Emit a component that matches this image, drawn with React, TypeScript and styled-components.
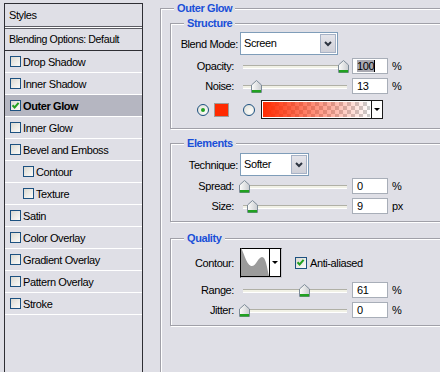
import styled, { createGlobalStyle } from 'styled-components';

const GlobalStyle = createGlobalStyle`
  html, body {
    margin: 0;
    padding: 0;
    width: 440px;
    height: 372px;
    overflow: hidden;
    background: #dfdfe6;
  }
  body {
    font-family: "Liberation Sans", Arial, sans-serif;
    font-size: 11px;
    letter-spacing: -0.4px;
    color: #000;
    white-space: nowrap;
  }
`;

const Page = styled.div`
  display: flex;
  align-items: flex-start;
  padding: 3px 0 0 4px;
`;

/* ---------- left styles list ---------- */

const StylesPanel = styled.div`
  flex-shrink: 0;
  width: 139px;
  height: 369px;
  box-sizing: border-box;
  border: 1px solid #2e2e34;
  border-bottom: none;
  background: #dfdfe6;
`;

const PanelHeader = styled.div`
  height: 22px;
  line-height: 22px;
  padding-left: 4px;
  border-bottom: 1px solid #5c5c64;
  box-shadow: 0 1px 0 #fff;
  margin-bottom: 1px;
`;

const BlendingRow = styled.div`
  height: 21px;
  line-height: 21px;
  padding-left: 4px;
  font-size: 10.6px;
  border-top: 1px solid #5c5c64;
  border-bottom: 1px solid #2e2e34;
`;

const StyleRow = styled.div<{ $active?: boolean; $indent?: boolean }>`
  display: flex;
  align-items: center;
  gap: 2px;
  height: 21px;
  padding-left: ${(p) => (p.$indent ? '18px' : '5px')};
  border-bottom: 1px solid #fff;
  background: ${(p) => (p.$active ? '#b5b6c1' : 'transparent')};
  font-weight: ${(p) => (p.$active ? 'bold' : 'normal')};
`;

const CheckBox = styled.span<{ $size?: number }>`
  position: relative;
  display: inline-block;
  flex-shrink: 0;
  width: ${(p) => p.$size ?? 11}px;
  height: ${(p) => p.$size ?? 11}px;
  box-sizing: border-box;
  border: 1px solid #1c5180;
  background: linear-gradient(135deg, #d9d8d0 0%, #ecebe6 50%, #fbfbf9 100%);
`;

const Check = () => (
  <svg width="9" height="9" viewBox="0 0 9 9" style={{ position: 'absolute', left: 0, top: 0 }}>
    <path d="M1.5 4.2 L3.6 6.4 L7.6 1.8" fill="none" stroke="#21a121" strokeWidth="2" />
  </svg>
);

/* ---------- right options ---------- */

const RightColumn = styled.div`
  flex-shrink: 0;
  margin: 5px 0 0 17px;
`;

const Group = styled.div<{ $mt?: number; $pad: string }>`
  position: relative;
  margin-top: ${(p) => p.$mt ?? 0}px;
  padding: ${(p) => p.$pad};
  border: 1px solid #a0a0a8;
  border-right: none;
  box-shadow: inset 1px 1px 0 #fff, 1px 1px 0 #fff;
`;

const OuterGroup = styled(Group)`
  width: 280px;
  height: 364px;
  box-sizing: border-box;
  border-bottom: none;
`;

const Title = styled.span`
  position: absolute;
  top: -8px;
  left: 13px;
  padding: 0 3px;
  line-height: 14px;
  background: #dfdfe6;
  color: #1a4fd8;
  font-weight: bold;
`;

const Row = styled.div<{ $h: number; $mt?: number }>`
  display: flex;
  align-items: center;
  height: ${(p) => p.$h}px;
  margin-top: ${(p) => p.$mt ?? 0}px;
`;

const Label = styled.span<{ $w: number }>`
  flex-shrink: 0;
  width: ${(p) => p.$w}px;
  text-align: right;
`;

const SelectBox = styled.div<{ $w: number }>`
  display: flex;
  margin-left: 2px;
  width: ${(p) => p.$w}px;
  height: 23px;
  box-sizing: border-box;
  border: 1px solid #7f9db9;
  background: #fff;
`;

const SelectText = styled.span`
  flex: 1;
  padding-left: 3px;
  line-height: 21px;
`;

const SelectButton = styled.span`
  display: flex;
  align-items: center;
  justify-content: center;
  width: 16px;
  margin: 1px;
  box-sizing: border-box;
  border: 1px solid #a6b2c6;
  background: linear-gradient(#e4e4ea, #cfd0d8);
`;

const Chevron = () => (
  <svg width="8" height="6" viewBox="0 0 8 6">
    <path d="M1 1 L4 4 L7 1" fill="none" stroke="#2d3440" strokeWidth="2" />
  </svg>
);

const SliderWrap = styled.div`
  position: relative;
  flex-shrink: 0;
  margin-left: 4px;
  width: 110px;
  height: 20px;
`;

const Track = styled.div`
  position: absolute;
  left: 5px;
  right: 1px;
  top: 9px;
  height: 2px;
  border-top: 1px solid #b0b0a6;
  border-bottom: 1px solid #fff;
  background: #f1f1e6;
`;

const ThumbSvg = styled.svg`
  position: absolute;
  top: 4px;
`;

const Slider = ({ pct }: { pct: number }) => (
  <SliderWrap>
    <Track />
    <ThumbSvg width="11" height="13" viewBox="0 0 11 13" style={{ left: 6 + pct * 99 - 5.5 }}>
      <defs>
        <linearGradient id="tg" x1="0" x2="1">
          <stop offset="0" stopColor="#fdfdfb" />
          <stop offset="1" stopColor="#c9ccd0" />
        </linearGradient>
      </defs>
      <path d="M5.5 0.5 L10.5 5 L10.5 12.5 L0.5 12.5 L0.5 5 Z" fill="url(#tg)" stroke="#7d8b98" />
      <rect x="1" y="10" width="9" height="2.5" fill="#21a121" />
    </ThumbSvg>
  </SliderWrap>
);

const ValueBox = styled.div`
  margin-left: 4px;
  width: 36px;
  height: 16px;
  box-sizing: border-box;
  border: 1px solid #a8aeb8;
  background: #fff;
  padding-left: 4px;
  line-height: 14px;
`;

const Selected = styled.span`
  background: #a9a9b1;
  border-right: 1px solid #000;
`;

const Unit = styled.span`
  margin-left: 4px;
`;

const Radio = styled.span<{ $on?: boolean; $ml: number }>`
  display: flex;
  align-items: center;
  justify-content: center;
  margin-left: ${(p) => p.$ml}px;
  width: 12px;
  height: 12px;
  box-sizing: border-box;
  border-radius: 50%;
  border: 1px solid #1c5180;
  background: radial-gradient(circle at 65% 65%, #fdfdfb, #dcdcd4);
  &::after {
    content: '';
    display: ${(p) => (p.$on ? 'block' : 'none')};
    width: 4px;
    height: 4px;
    border-radius: 50%;
    background: #21a121;
  }
`;

const Swatch = styled.span`
  margin-left: 5px;
  width: 15px;
  height: 14px;
  box-sizing: border-box;
  border: 1px solid #a09c98;
  background: #ff2a00;
`;

const GradientBox = styled.div`
  display: flex;
  margin-left: 6px;
  width: 122px;
  height: 19px;
  box-sizing: border-box;
  border: 1px solid #1a1a1a;
  background: #fff;
`;

const GradientFill = styled.span`
  flex: 1;
  margin: 1px;
  background:
    linear-gradient(to right, rgba(255, 42, 0, 1), rgba(255, 42, 0, 0)),
    repeating-conic-gradient(#cdcdcd 0% 25%, #fff 0% 50%) 0 0 / 8px 8px;
`;

const DropArrow = styled.span`
  display: flex;
  align-items: center;
  justify-content: center;
  width: 10px;
  border-left: 1px solid #1a1a1a;
  background: #fff;
  &::after {
    content: '';
    border-left: 3px solid transparent;
    border-right: 3px solid transparent;
    border-top: 3px solid #000;
  }
`;

const ContourBox = styled.div`
  display: flex;
  margin-left: 6px;
  width: 42px;
  height: 30px;
  box-sizing: border-box;
  border: 1px solid #c8c8ce;
  border-top-color: #000;
  border-left-color: #000;
  background: #fff;
`;

const ContourPreview = styled.span`
  display: flex;
  align-items: flex-end;
  width: 29px;
  border-right: 1px solid #000;
  border-bottom: 1px solid #000;
`;

const ContourArrow = styled(DropArrow)`
  border-left: none;
  border-right: 1px solid #000;
  border-bottom: 1px solid #000;
  width: 10px;
`;

const CheckLabel = styled.span`
  margin-left: 3px;
`;

const App = () => {
  const styleItems = [
    { name: 'Drop Shadow' },
    { name: 'Inner Shadow' },
    { name: 'Outer Glow', active: true },
    { name: 'Inner Glow' },
    { name: 'Bevel and Emboss' },
    { name: 'Contour', indent: true },
    { name: 'Texture', indent: true },
    { name: 'Satin' },
    { name: 'Color Overlay' },
    { name: 'Gradient Overlay' },
    { name: 'Pattern Overlay' },
    { name: 'Stroke' },
  ];

  return (
    <>
      <GlobalStyle />
      <Page>
        <StylesPanel>
          <PanelHeader>Styles</PanelHeader>
          <BlendingRow>Blending Options: Default</BlendingRow>
          {styleItems.map((item) => (
            <StyleRow key={item.name} $active={item.active} $indent={item.indent}>
              <CheckBox>{item.active && <Check />}</CheckBox>
              {item.name}
            </StyleRow>
          ))}
        </StylesPanel>

        <RightColumn>
          <OuterGroup $pad="14px 0 0 9px">
            <Title>Outer Glow</Title>

            <Group $pad="8px 0 7px 0">
              <Title>Structure</Title>
              <Row $h={23}>
                <Label $w={67}>Blend Mode:</Label>
                <SelectBox $w={98}>
                  <SelectText>Screen</SelectText>
                  <SelectButton>
                    <Chevron />
                  </SelectButton>
                </SelectBox>
              </Row>
              <Row $h={20} $mt={1}>
                <Label $w={63}>Opacity:</Label>
                <Slider pct={1} />
                <ValueBox>
                  <Selected>100</Selected>
                </ValueBox>
                <Unit>%</Unit>
              </Row>
              <Row $h={20}>
                <Label $w={63}>Noise:</Label>
                <Slider pct={0.13} />
                <ValueBox>13</ValueBox>
                <Unit>%</Unit>
              </Row>
              <Row $h={23} $mt={2}>
                <Radio $on $ml={26} />
                <Swatch />
                <Radio $ml={14} />
                <GradientBox>
                  <GradientFill />
                  <DropArrow />
                </GradientBox>
              </Row>
            </Group>

            <Group $mt={14} $pad="9px 0 5px 0">
              <Title>Elements</Title>
              <Row $h={23}>
                <Label $w={67}>Technique:</Label>
                <SelectBox $w={69}>
                  <SelectText>Softer</SelectText>
                  <SelectButton>
                    <Chevron />
                  </SelectButton>
                </SelectBox>
              </Row>
              <Row $h={20}>
                <Label $w={63}>Spread:</Label>
                <Slider pct={0} />
                <ValueBox>0</ValueBox>
                <Unit>%</Unit>
              </Row>
              <Row $h={20}>
                <Label $w={63}>Size:</Label>
                <Slider pct={0.09} />
                <ValueBox>9</ValueBox>
                <Unit>px</Unit>
              </Row>
            </Group>

            <Group $mt={16} $pad="9px 0 5px 0">
              <Title>Quality</Title>
              <Row $h={30}>
                <Label $w={63}>Contour:</Label>
                <ContourBox>
                  <ContourPreview>
                    <svg width="28" height="28" viewBox="0 0 28 28">
                      <path
                        d="M0 0 C2 2 5 16 10 18 C15 19 17 9 21 9 C25 9 26 20 28 28 L0 28 Z"
                        fill="#9b9b9b"
                      />
                    </svg>
                  </ContourPreview>
                  <ContourArrow />
                </ContourBox>
                <CheckBox $size={12} style={{ marginLeft: 13 }}>
                  <Check />
                </CheckBox>
                <CheckLabel>Anti-aliased</CheckLabel>
              </Row>
              <Row $h={20} $mt={2}>
                <Label $w={63}>Range:</Label>
                <Slider pct={0.61} />
                <ValueBox>61</ValueBox>
                <Unit>%</Unit>
              </Row>
              <Row $h={20}>
                <Label $w={63}>Jitter:</Label>
                <Slider pct={0} />
                <ValueBox>0</ValueBox>
                <Unit>%</Unit>
              </Row>
            </Group>
          </OuterGroup>
        </RightColumn>
      </Page>
    </>
  );
};

export default App;
